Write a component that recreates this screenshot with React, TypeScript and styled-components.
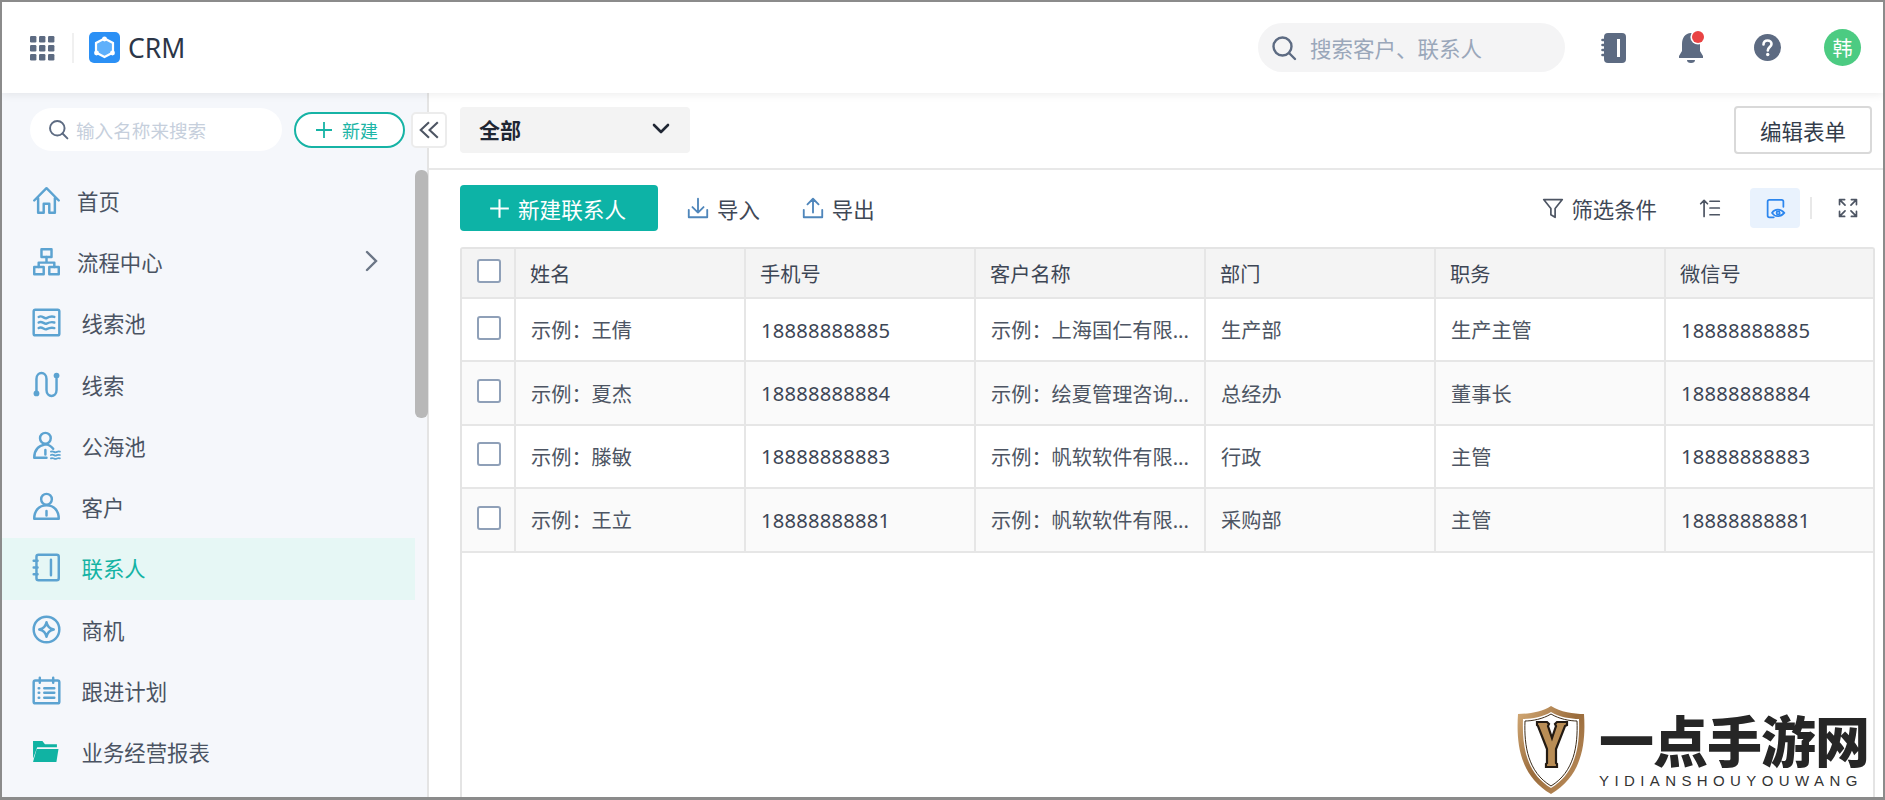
import React from "react";
import styled, { createGlobalStyle } from "styled-components";

const Global = createGlobalStyle`
  html, body { margin: 0; padding: 0; width: 1885px; height: 800px; overflow: hidden; background: #fff; }
  * { box-sizing: border-box; }
  #root { font-family: "Noto Sans", "Noto Sans CJK SC", sans-serif; }
`;

const Frame = styled.div`
  position: relative; width: 1885px; height: 800px; border: 2px solid #8b8b8b; border-bottom-width: 3px;
  display: flex; flex-direction: column; overflow: hidden; background: #fff;
`;
const TopBar = styled.header`
  height: 91px; flex: none; display: flex; align-items: center; padding: 0 22px 0 27px; background: #fff;
  box-shadow: 0 2px 8px rgba(0,0,0,.07); position: relative; z-index: 2;
`;
const Divider = styled.span`
  width: 2px; height: 30px; background: #f0f0f0; margin: 0 15px 0 17px;
`;
const Brand = styled.div`
  font-size: 26.5px; color: #2b3648; margin-left: 8px; line-height: 30px; flex: 1;
`;
const TopSearch = styled.div`
  width: 307px; height: 49px; border-radius: 25px; background: #f4f4f5; display: flex; align-items: center;
  gap: 13px; padding-left: 13px; color: #9aa7ba; font-size: 21.5px; margin-right: 36px;
`;
const TopIconSlot = styled.span<{ $w: number; $ml: number }>`
  width: ${p => p.$w}px; margin-left: ${p => p.$ml}px; flex: none; display: flex; justify-content: center; align-items: center;
`;
const Avatar = styled.span`
  width: 37px; height: 37px; border-radius: 50%; background: #4ccb82; color: #fff; font-size: 20px; flex: none;
  display: flex; align-items: center; justify-content: center; margin-left: 43px;
`;
const Body = styled.div`
  flex: 1; display: flex; min-height: 0;
`;
const Side = styled.aside`
  position: relative; width: 427px; flex: none; background: #f5f7fb; border-right: 2px solid #e4e4e4;
`;
const SideTop = styled.div`
  display: flex; padding: 15px 0 0 28px; height: 77.5px; align-items: flex-start;
`;
const SideSearch = styled.div`
  width: 252px; height: 43px; background: #fff; border-radius: 22px; display: flex; align-items: center;
  padding-left: 18px; gap: 7px; font-size: 18.6px; color: #c6cfdc;
`;
const NewBtn = styled.button`
  width: 111px; height: 36px; margin: 4px 0 0 12px; border: 2px solid #16b3a5; border-radius: 18px; background: #fff;
  color: #1cb5a6; font: inherit; font-size: 18px; display: flex; align-items: center; justify-content: center; gap: 9px; padding: 0 6px 0 0;
`;
const Collapse = styled.button`
  position: absolute; left: 409px; top: 19px; width: 36px; height: 36px; background: #fff; border: 2px solid #ececec;
  border-radius: 5px; padding: 0; display: flex; align-items: center; justify-content: center; z-index: 3;
`;
const Thumb = styled.div`
  position: absolute; left: 413px; top: 77px; width: 13px; height: 248px; background: #b8b8b8; border-radius: 6px;
`;
const NavList = styled.nav`
  display: flex; flex-direction: column;
`;
const NavItem = styled.div<{ $active?: boolean }>`
  height: 61.3px; width: 413px; display: flex; align-items: center; padding: 0 0 2px 30px; font-size: 21.4px;
  color: ${p => (p.$active ? "#14b3a4" : "#4a5362")};
  background: ${p => (p.$active ? "#e6f7f5" : "transparent")};
`;
const NavIcon = styled.span<{ $w: number }>`
  width: ${p => p.$w}px; flex: none; display: flex; align-items: center;
`;
const NavArrow = styled.span`
  margin-left: auto; margin-right: 36px; display: flex;
`;
const Main = styled.main`
  flex: 1; min-width: 0; display: flex; flex-direction: column;
`;
const SubHead = styled.div`
  height: 77px; flex: none; border-bottom: 2px solid #e8e8e8; display: flex; align-items: center;
  justify-content: space-between; padding: 0 11px 1px 31px;
`;
const ViewSelect = styled.div`
  width: 230px; height: 46px; border-radius: 4px; background: #f3f3f3; display: flex; align-items: center;
  justify-content: space-between; padding: 0 20px 2px 19px; font-size: 21px; font-weight: 700; color: #1f2633;
`;
const EditBtn = styled.button`
  width: 138px; height: 48px; border: 2px solid #d9d9d9; border-radius: 4px; background: #fff; font: inherit;
  font-size: 21.5px; color: #333c4a; padding: 0;
`;
const Toolbar = styled.div`
  height: 77px; flex: none; display: flex; align-items: center; padding: 0 24px 1px 31px;
`;
const Primary = styled.button`
  width: 198px; height: 46px; background: #0db3a6; border: 0; border-radius: 4px; color: #fff; font: inherit; font-size: 21.6px;
  display: flex; align-items: center; justify-content: center; gap: 8px; padding: 0 3px 0 0; margin-right: 28px;
`;
const ToolLink = styled.span<{ $mr?: number }>`
  display: flex; align-items: center; gap: 7px; font-size: 21.4px; color: #3f4856; margin-right: ${p => p.$mr ?? 41}px;
`;
const Spacer = styled.span`
  flex: 1;
`;
const ActiveTool = styled.span`
  width: 50px; height: 40px; background: #e9f2fd; border-radius: 4px; display: flex; align-items: center; justify-content: center;
`;
const ToolIcon = styled.span`
  display: flex; margin: 0 29px 0 0;
`;
const ToolSep = styled.span`
  width: 2px; height: 22px; background: #e8e8e8; margin: 0 25px 0 10px;
`;
const TableWrap = styled.div`
  flex: 1; margin: 0 8px 0 31px; border: 2px solid #e4e4e4; border-bottom: 0; border-radius: 3px 3px 0 0; min-height: 0;
`;
const Row = styled.div<{ $head?: boolean; $alt?: boolean }>`
  display: grid; grid-template-columns: 52px repeat(5, 230px) 1fr; height: ${p => (p.$head ? "50px" : "63.4px")};
  border-bottom: 2px solid #e6e6e6;
  background: ${p => (p.$head ? "#f4f4f4" : p.$alt ? "#fafafa" : "#fff")};
`;
const Cell = styled.div<{ $head?: boolean; $num?: boolean }>`
  display: flex; align-items: center; padding-left: ${p => (p.$head ? "14px" : "15px")}; border-left: 2px solid #e6e6e6;
  font-size: 20.2px; color: ${p => (p.$head || p.$num ? "#3d4655" : "#4d5563")}; white-space: nowrap; overflow: hidden;
  letter-spacing: ${p => (p.$num ? "0.2px" : "0")};
  &:first-child { border-left: 0; padding-left: 15px; }
`;
const Check = styled.span`
  width: 24px; height: 24px; border: 2px solid #8fa0b8; border-radius: 3px; background: #fff; margin-top: -4px;
`;
const Mark = styled.div`
  position: absolute; left: 1514px; top: 703px; display: flex; gap: 13px;
`;
const MarkText = styled.div`
  display: flex; flex-direction: column;
`;
const MarkTitle = styled.div`
  font-family: "Noto Sans CJK SC", sans-serif; font-weight: 900; font-size: 55px; line-height: 66px; color: #262626; white-space: nowrap; letter-spacing: -1px;
`;
const MarkSub = styled.div`
  font-family: "Liberation Sans", sans-serif; font-size: 15px; line-height: 17px; color: #333; letter-spacing: 5.4px; white-space: nowrap; margin-top: 1px;
`;

const blue = "#5ca3d1";
const slate = "#5d6b82";
const S = ({ size = 29, children, fill = "none", stroke = blue, sw = 2.2 }: any) => (
  <svg width={size} height={size} viewBox="0 0 26 26" fill={fill} stroke={stroke} strokeWidth={sw} strokeLinecap="round" strokeLinejoin="round">{children}</svg>
);

const Grid9 = () => (
  <svg width="26" height="26" viewBox="0 0 26 26" fill={slate}>
    {[1, 10, 19].flatMap(y => [1, 10, 19].map(x => <rect key={`${x}${y}`} x={x} y={y} width="6.4" height="6.4" rx="1.2" />))}
  </svg>
);
const Logo = () => (
  <svg width="31" height="31" viewBox="0 0 31 31">
    <rect width="31" height="31" rx="5" fill="#2b90f5" />
    <path d="M15.5 6.5 24 11v9.5L15.5 25 7 20.5V11z" fill="#5fb0fb" stroke="#fff" strokeWidth="2.2" />
    <circle cx="15.5" cy="7" r="2.4" fill="#fff" /><circle cx="7.5" cy="21" r="2.4" fill="#fff" /><circle cx="23.5" cy="21" r="2.4" fill="#fff" />
  </svg>
);
const Search = ({ size = 26, color = slate }: any) => (
  <svg width={size} height={size} viewBox="0 0 26 26" fill="none" stroke={color} strokeWidth="2.4" strokeLinecap="round"><circle cx="11.5" cy="11.5" r="9" /><path d="m18 18 6 6" /></svg>
);
const Plus = ({ size = 18, color = "#fff" }: any) => (
  <svg width={size} height={size} viewBox="0 0 18 18" stroke={color} strokeWidth="1.8"><path d="M9 1v16M1 9h16" /></svg>
);
const Book = () => (
  <svg width="26" height="32" viewBox="0 0 26 32" fill={slate}>
    <rect x="3" y="1" width="22" height="30" rx="4" /><rect x="16" y="7" width="3" height="18" fill="#fff" />
    <path d="M1.500 8h3M1.500 13h3M1.500 18h3M1.500 23h3" stroke={slate} strokeWidth="2.6" strokeLinecap="round" />
  </svg>
);
const Bell = () => (
  <svg width="30" height="36" viewBox="0 0 30 36">
    <path d="M14 3c-6 0-9 5-9 11v7l-3 5v2h24v-2l-3-5v-7c0-6-3-11-9-11z" fill={slate} />
    <path d="M10 30a4 3 0 0 0 8 0z" fill={slate} />
    <circle cx="21" cy="7" r="7.6" fill="#fff" /><circle cx="21" cy="7" r="6" fill="#e94343" />
  </svg>
);
const Help = () => (
  <svg width="27" height="27" viewBox="0 0 27 27"><circle cx="13.5" cy="13.5" r="13.5" fill={slate} />
    <path d="M9.500 10.500c0-2.500 1.800-4 4-4s4 1.500 4 3.500c0 3-3.700 3-3.700 6.500" fill="none" stroke="#fff" strokeWidth="2.600" strokeLinecap="round" /><circle cx="13.700" cy="20.500" r="1.700" fill="#fff" /></svg>
);
const DblLeft = () => (
  <svg width="22" height="22" viewBox="0 0 20 20" fill="none" stroke="#4d5563" strokeWidth="1.900"><path d="M10 3 2.5 10 10 17M18 3l-7.5 7 7.5 7" /></svg>
);
const Chevron = ({ color = "#6b7686" }: any) => (
  <svg width="14" height="22" viewBox="0 0 14 22" fill="none" stroke={color} strokeWidth="2.4" strokeLinecap="round"><path d="m2 2 9 9-9 9" /></svg>
);
const Caret = () => (
  <svg width="18" height="12" viewBox="0 0 18 12" fill="none" stroke="#1f2633" strokeWidth="2.6" strokeLinecap="round" strokeLinejoin="round"><path d="m2 2 7 7 7-7" /></svg>
);

const I = {
  home: <S><path d="M2 13 13 2l11 11M5.5 11v13h5v-8h5v8h5V11" /></S>,
  flow: <S><rect x="8.5" y="2" width="9" height="7" /><rect x="2" y="18" width="8.5" height="6.5" /><rect x="15.5" y="18" width="8.5" height="6.5" /><path d="M13 9v5M6 18v-4h14v4" /></S>,
  pool: <S><rect x="1.5" y="1.5" width="23" height="23" rx="1.5" /><path d="M6 8c3-2 5 2 7 1s4-2 7-1M6 13c3-2 5 2 7 1s4-2 7-1M6 18c3-2 5 2 7 1s4-2 7-1" /></S>,
  lead: <S><path d="M4 21V8c0-7 9-7 9 0v10c0 7 9 7 9 0V8" /><circle cx="4" cy="21" r="2.6" fill={blue} stroke="none" /><circle cx="22" cy="5" r="2.6" fill={blue} stroke="none" /></S>,
  sea: <S><circle cx="12" cy="6.5" r="4.8" /><path d="M2 24c0-7 4-11 10-12 2.5 0 5 1.500 7 4M2 24h11M12 17v4" /><path d="M17 18.500c2-1 3 1 4.500.5s2-1 3.500-.5M17 21.500c2-1 3 1 4.500.5s2-1 3.500-.5M17 24.500c2-1 3 1 4.500.5s2-1 3.500-.5" strokeWidth="1.600" /></S>,
  client: <S><circle cx="13" cy="6.500" r="4.800" /><path d="M2 24c0-7 4-12 11-12s11 5 11 12zM13 17v4" /></S>,
  contact: <S><rect x="4" y="1.500" width="20" height="23" rx="1.800" /><path d="M17 6v14M1.500 7H5M1.500 13H5M1.500 19H5" /></S>,
  opp: <S><circle cx="13" cy="13" r="11.500" /><path d="M13 6.500c.8 4 2.500 5.700 6.500 6.500-4 .8-5.700 2.500-6.500 6.500-.8-4-2.500-5.700-6.500-6.500 4-.8 5.700-2.500 6.500-6.500z" /></S>,
  plan: <S><rect x="1.500" y="4" width="23" height="20.500" rx="1.500" /><path d="M7 1.500V6M19 1.500V6M11 11h9M11 15h9M11 19.500h9M6 11h.5M6 15h.5M6 19.500h.5" /></S>,
  folder: <svg width="27" height="27" viewBox="0 0 26 26" fill="#10b3a3"><path d="M1 3h9l2.500 3H24v3H5l-4 11z" /><path d="M4.500 10.500H25.500L23.500 23H1z" /></svg>,
};

const Filter = () => <S size={22} stroke="#4d5563" sw="2"><path d="M2 3h22l-8.500 10.500V24l-5-3v-7.500z" /></S>;
const Sort = () => <S size={22} stroke="#4d5563" sw="2"><path d="M6 23V4M2 8l4-4 4 4M13 5h11M13 13h11M13 21h11" /></S>;
const BookEye = () => (
  <svg width="21" height="21" viewBox="0 0 24 24" fill="none" stroke="#2c86ee" strokeWidth="2" strokeLinecap="round">
    <path d="M21 10V4a2 2 0 0 0-2-2H5a2 2 0 0 0-2 2v16c0 1.500 1 2 2 2h5" />
    <path d="M8 17c3-5 10-5 14 0-4 5-11 5-14 0z" fill="#e9f2fd" /><circle cx="15" cy="17" r="1.800" />
  </svg>
);
const Expand = () => <S size={22} stroke="#4d5563" sw="2"><path d="M3 9V3h6M3 3l6.500 6.500M23 9V3h-6M23 3l-6.500 6.500M3 17v6h6M3 23l6.500-6.500M23 17v6h-6M23 23l-6.500-6.500" /></S>;
const Down = () => <S size={24} stroke="#4f86bb" sw="2"><path d="M13 3v15M7 12l6 6 6-6M3 15v8h20v-8" /></S>;
const Up = () => <S size={24} stroke="#4f86bb" sw="2"><path d="M13 18V3M7 9l6-6 6 6M3 15v8h20v-8" /></S>;

const nav = [
  { t: "首页", i: I.home, w: 45 }, { t: "流程中心", i: I.flow, w: 45, more: true },
  { t: "线索池", i: I.pool, w: 49.5 }, { t: "线索", i: I.lead, w: 49.5 }, { t: "公海池", i: I.sea, w: 49.5 }, { t: "客户", i: I.client, w: 49.5 },
  { t: "联系人", i: I.contact, w: 49.5, active: true }, { t: "商机", i: I.opp, w: 49.5 }, { t: "跟进计划", i: I.plan, w: 49.5 }, { t: "业务经营报表", i: I.folder, w: 49.5 },
];
const cols = ["姓名", "手机号", "客户名称", "部门", "职务", "微信号"];
const rows = [
  ["示例:王倩", "18888888885", "示例:上海国仁有限...", "生产部", "生产主管", "18888888885"],
  ["示例:夏杰", "18888888884", "示例:绘夏管理咨询...", "总经办", "董事长", "18888888884"],
  ["示例:滕敏", "18888888883", "示例:帆软软件有限...", "行政", "主管", "18888888883"],
  ["示例:王立", "18888888881", "示例:帆软软件有限...", "采购部", "主管", "18888888881"],
].map(r => r.map(v => v.replace(":", "\uFF1A")));

const Shield = () => (
  <svg width="70" height="90" viewBox="0 0 70 90">
    <defs><linearGradient id="g" x1="0" x2="1" y1="0" y2="1"><stop offset="0" stopColor="#d5ac78" /><stop offset=".5" stopColor="#9a6c3c" /><stop offset="1" stopColor="#c39563" /></linearGradient></defs>
    <path d="M35 1C26 7 12 9 2 9c-2 30 2 62 33 80 31-18 35-50 33-80C58 9 44 7 35 1z" fill="url(#g)" />
    <path d="M35 7C27 12 15 14 7 14c-1 27 3 54 28 69 25-15 29-42 28-69-8 0-20-2-28-7z" fill="#fff" />
    <path d="M35 9C27 14 16 16 9 16c-1 25 3 51 26 65 23-14 27-40 26-65-7 0-18-2-26-7z" fill="none" stroke="#3a2a18" strokeWidth="1" />
    <path d="M21 17h10l2 2-1 2 4 12 4-12-1-2 2-2h10v3l-2 1-9 23v14l1 1v3H30v-3l1-1V44L22 21l-1-1z" fill="#b98d55" stroke="#231a12" strokeWidth="2.200" />
  </svg>
);

export default function App() {
  return (
    <>
      <Global />
      <Frame>
        <TopBar>
          <Grid9 />
          <Divider />
          <Logo />
          <Brand>CRM</Brand>
          <TopSearch><Search />搜索客户、联系人</TopSearch>
          <TopIconSlot $w={26} $ml={0}><Book /></TopIconSlot>
          <TopIconSlot $w={30} $ml={50}><Bell /></TopIconSlot>
          <TopIconSlot $w={27} $ml={47}><Help /></TopIconSlot>
          <Avatar>韩</Avatar>
        </TopBar>
        <Body>
          <Side>
            <SideTop>
              <SideSearch><Search size={21} />输入名称来搜索</SideSearch>
              <NewBtn><Plus color="#16b3a5" />新建</NewBtn>
            </SideTop>
            <Collapse><DblLeft /></Collapse>
            <NavList>
              {nav.map(n => (
                <NavItem key={n.t} $active={n.active}>
                  <NavIcon $w={n.w}>{n.i}</NavIcon>
                  {n.t}
                  {n.more && <NavArrow><Chevron /></NavArrow>}
                </NavItem>
              ))}
            </NavList>
            <Thumb />
          </Side>
          <Main>
            <SubHead>
              <ViewSelect>全部<Caret /></ViewSelect>
              <EditBtn>编辑表单</EditBtn>
            </SubHead>
            <Toolbar>
              <Primary><Plus size={21} />新建联系人</Primary>
              <ToolLink><Down />导入</ToolLink>
              <ToolLink><Up />导出</ToolLink>
              <Spacer />
              <ToolLink $mr={42}><Filter />筛选条件</ToolLink>
              <ToolIcon><Sort /></ToolIcon>
              <ActiveTool><BookEye /></ActiveTool>
              <ToolSep />
              <Expand />
            </Toolbar>
            <TableWrap>
              <Row $head>
                <Cell $head><Check /></Cell>
                {cols.map(c => <Cell $head key={c}>{c}</Cell>)}
              </Row>
              {rows.map((r, i) => (
                <Row key={r[1]} $alt={i % 2 === 1}>
                  <Cell><Check /></Cell>
                  {r.map((v, j) => <Cell key={j} $num={j === 1 || j === 5}>{v}</Cell>)}
                </Row>
              ))}
            </TableWrap>
          </Main>
        </Body>
        <Mark>
          <Shield />
          <MarkText>
            <MarkTitle>一点手游网</MarkTitle>
            <MarkSub>YIDIANSHOUYOUWANG</MarkSub>
          </MarkText>
        </Mark>
      </Frame>
    </>
  );
}
